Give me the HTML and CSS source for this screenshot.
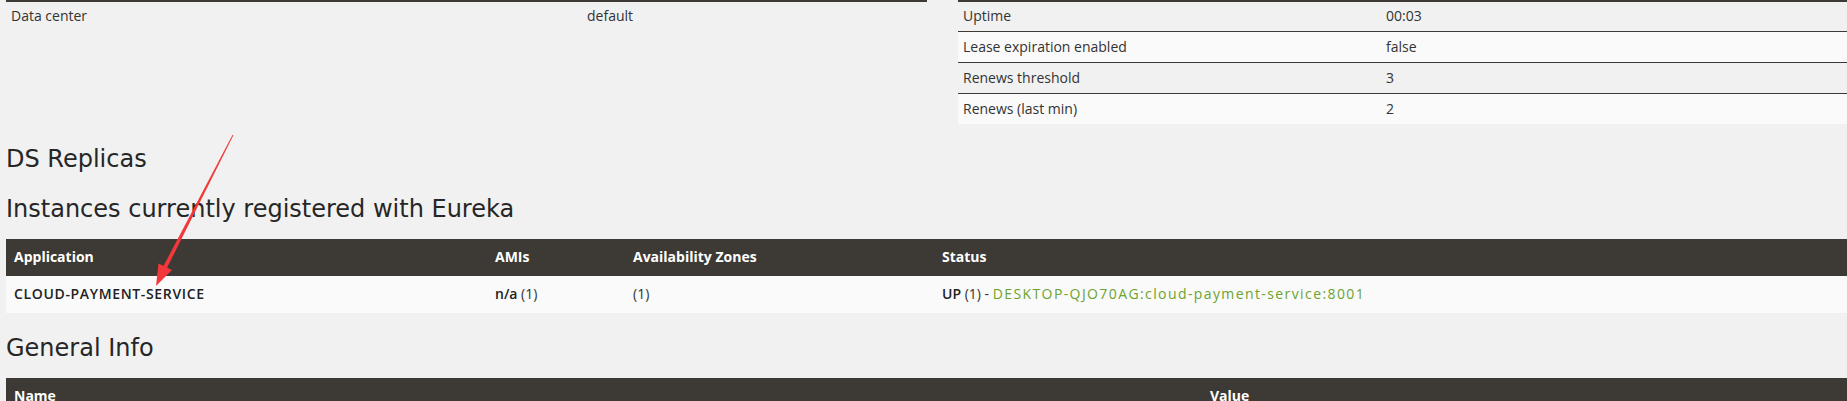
FILE: index.html
```html
<!DOCTYPE html>
<html lang="en">

<head>
    <meta charset="UTF-8">
    <meta name="viewport" content="width=device-width, initial-scale=1.0">
    <title>Eureka</title>
    <link rel="stylesheet" href="styles.css">
</head>

<body>
    <div class="page">
        <div class="info-row">
            <table class="info-table info-left">
                <tr>
                    <td class="key">Data center</td>
                    <td>default</td>
                </tr>
            </table>
            <table class="info-table info-right">
                <tr>
                    <td class="key">Uptime</td>
                    <td>00:03</td>
                </tr>
                <tr>
                    <td class="key">Lease expiration enabled</td>
                    <td>false</td>
                </tr>
                <tr>
                    <td class="key">Renews threshold</td>
                    <td>3</td>
                </tr>
                <tr>
                    <td class="key">Renews (last min)</td>
                    <td>2</td>
                </tr>
            </table>
        </div>

        <h2 class="replicas-title">DS Replicas</h2>

        <h2>Instances currently registered with Eureka</h2>
        <table class="data-table">
            <thead>
                <tr>
                    <th class="col-app">Application</th>
                    <th class="col-ami">AMIs</th>
                    <th class="col-zone">Availability Zones</th>
                    <th>Status</th>
                </tr>
            </thead>
            <tbody>
                <tr>
                    <td><b class="app-name">CLOUD-PAYMENT-SERVICE</b></td>
                    <td><b>n/a</b> (1)</td>
                    <td>(1)</td>
                    <td><b>UP</b> (1) - <a href="#">DESKTOP-QJO70AG:cloud-payment-service:8001</a></td>
                </tr>
            </tbody>
        </table>

        <h2>General Info</h2>
        <table class="data-table">
            <thead>
                <tr>
                    <th class="col-name">Name</th>
                    <th>Value</th>
                </tr>
            </thead>
        </table>

        <!-- annotation arrow drawn over the page -->
        <svg class="arrow" width="260" height="300" viewBox="0 0 260 300">
            <polygon points="233.4,135.2 232.6,134.8 163.3,266.3 166.9,268.1" fill="#f2383a" />
            <polygon points="156,286 172,270 158.5,263.5" fill="#f2383a" />
        </svg>
    </div>
</body>

</html>
```

FILE: styles.css
```css
html,
body {
    margin: 0;
    overflow: hidden;
}

body {
    background-color: #f1f1f1;
    color: #333;
    font-family: "Open Sans", "Liberation Sans", sans-serif;
    font-size: 14px;
    line-height: 20px;
}

.page {
    position: relative;
    width: 1873px;
    padding-left: 6px;
}

.info-row {
    display: grid;
    grid-template-columns: 921px 921px;
    column-gap: 31px;
    align-items: start;
}

table {
    border-collapse: collapse;
    width: 100%;
}

.info-table td {
    padding: 5px;
    border-top: 1px solid #3d3934;
    text-align: left;
    vertical-align: top;
}

.info-table tr:first-child td {
    border-top-width: 2px;
    padding-top: 4px;
}

.info-table tr:nth-child(even) {
    background-color: #fafafa;
}

.info-left .key {
    width: 566px;
}

.info-right .key {
    width: 413px;
}

h2 {
    font-family: "DejaVu Sans", "Liberation Sans", sans-serif;
    font-weight: normal;
    font-size: 24px;
    line-height: 26px;
    color: #262626;
    margin: 22px 0 17px;
}

.replicas-title {
    margin-bottom: 24px;
}

.data-table th {
    background-color: #3d3934;
    color: #fff;
    font-weight: bold;
    text-align: left;
    padding: 8px;
    border-bottom: 1px solid #3d3934;
}

.data-table td {
    background-color: #fafafa;
    padding: 8px;
    border-bottom: 1px solid #fafafa;
    text-align: left;
}

.data-table b {
    font-weight: 600;
    color: #222;
}

.app-name {
    letter-spacing: 0.65px;
}

.col-app {
    width: 465px;
}

.col-ami {
    width: 122px;
}

.col-zone {
    width: 293px;
}

.col-name {
    width: 1180px;
}

a {
    color: #6ba32e;
    text-decoration: none;
    letter-spacing: 1.4px;
}

.arrow {
    position: absolute;
    left: 0;
    top: 0;
}
```
